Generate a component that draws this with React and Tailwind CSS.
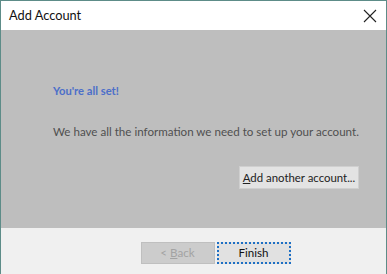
import React from 'react';

const App = () => {
    return (
        <div className="w-[387px] h-[274px] flex flex-col border border-b-0 border-[#5d8c88] overflow-hidden whitespace-nowrap" style={{ fontFamily: 'Lato, "Noto Sans", sans-serif' }}>
            <div className="h-[29px] bg-white flex items-center justify-between pl-[8px] pr-[9px] shrink-0">
                <span className="text-[12.8px] text-[#111]">Add Account</span>
                <svg width="14" height="14" viewBox="0 0 14 14" className="text-[#222]">
                    <path d="M1 1 L13 13 M13 1 L1 13" stroke="currentColor" strokeWidth="1.1" fill="none" />
                </svg>
            </div>

            <div className="h-[198px] bg-[#bebebe] flex flex-col pl-[52px] pr-[27px] shrink-0">
                <p className="mt-[53px] text-[11.2px] font-bold text-[#4c6fc9]">You're all set!</p>
                <p className="mt-[23px] text-[11.6px] text-[#505050]">We have all the information we need to set up your account.</p>
                <div className="flex justify-end mt-[26px]">
                    <button className="w-[120px] h-[23px] bg-[#e3e3e3] border border-[#cfcfcf] text-[11.4px] text-[#222]">
                        <span className="underline">A</span>dd another account...
                    </button>
                </div>
            </div>

            <div className="flex-1 bg-[#f0f0f0] flex justify-center gap-[2px] pt-[14px] pl-[44px]">
                <button disabled className="w-[74px] h-[22px] bg-[#cccccc] border border-[#bfbfbf] text-[11.6px] text-[#a3a3a3]">
                    &lt; <span className="underline">B</span>ack
                </button>
                <button className="w-[74px] h-[22px] bg-[#e1e1e1] border-2 border-dotted border-[#1d6fc4] text-[11.6px] text-[#111]">
                    Finish
                </button>
            </div>
        </div>
    );
};

export default App;
